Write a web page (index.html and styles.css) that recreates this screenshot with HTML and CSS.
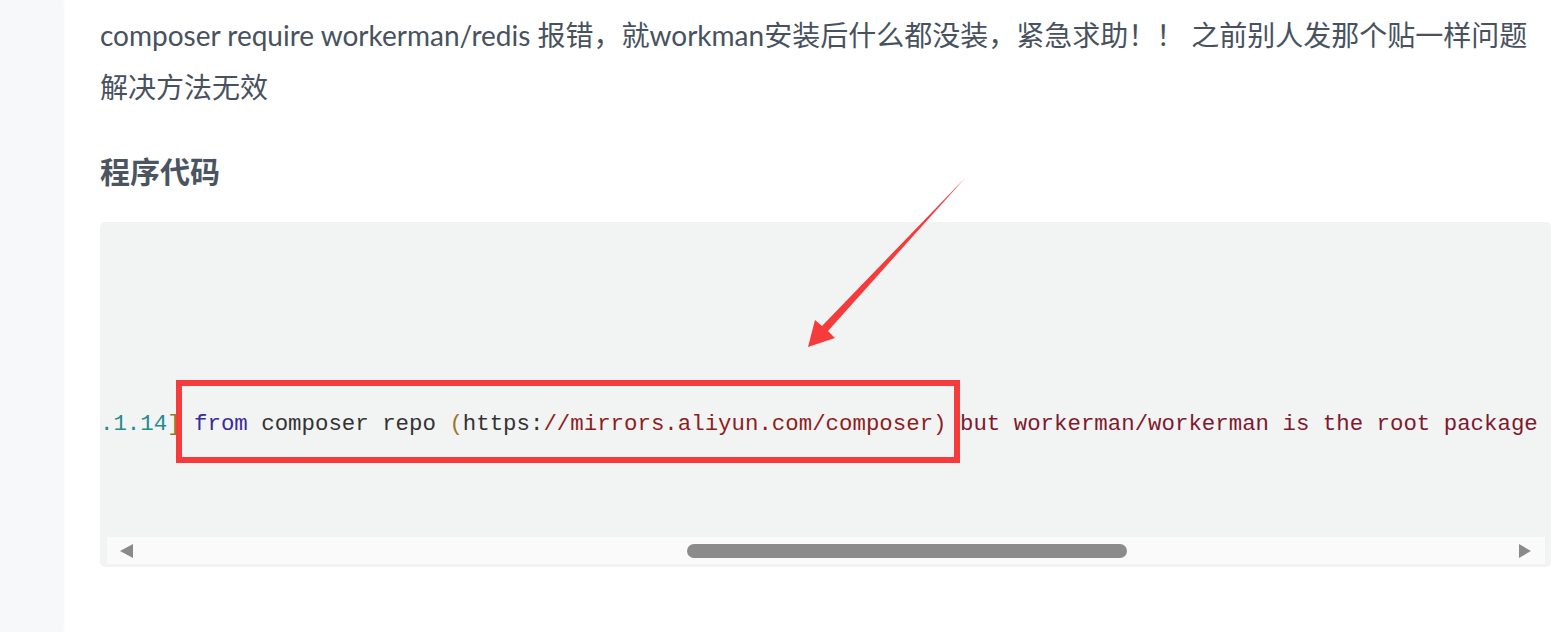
FILE: index.html
```html
<!DOCTYPE html>
<html lang="zh-CN">
<head>
  <meta charset="UTF-8" />
  <meta name="viewport" content="width=device-width, initial-scale=1.0"/>
  <title>composer require workerman/redis 报错</title>
  <link rel="stylesheet" href="styles.css">
</head>
<body>

<aside class="sidebar"></aside>

<main class="post">
  <p class="question">composer require workerman/redis 报错，就workman安装后什么都没装，紧急求助！！ 之前别人发那个贴一样问题解决方法无效</p>

  <h2 class="section-title">程序代码</h2>

  <div class="code-box">
    <pre class="code"><span class="c-num">.1.14</span><span class="c-brk">]</span> <span class="c-kw">from</span> composer repo <span class="c-brk">(</span>https:<span class="c-str">//mirrors.aliyun.com/composer)</span> <span class="c-err">but workerman/workerman is the root package</span></pre>
    <div class="scrollbar">
      <span class="arrow left"></span>
      <div class="rail"><div class="thumb"></div></div>
      <span class="arrow right"></span>
    </div>
  </div>
</main>

<!-- screenshot annotation -->
<svg class="annotation" width="1563" height="632" viewBox="0 0 1563 632">
  <rect x="179" y="383" width="778" height="77" fill="none" stroke="#f53b3b" stroke-width="6"/>
  <polygon points="966,177 828,331 835,338 808,347 815,320 822,326" fill="#f53b3b"/>
</svg>

</body>
</html>
```

FILE: styles.css
```css
* {
  box-sizing: border-box;
}

body {
  margin: 0;
  display: flex;
  min-height: 100vh;
  background: #fff;
  font-family: Lato, "Noto Sans CJK SC", sans-serif;
  color: #47525e;
  position: relative;
  overflow: hidden;
}

.sidebar {
  width: 63px;
  flex-shrink: 0;
  background: #f7f8fa;
  box-shadow: 1px 0 3px rgba(0, 0, 0, 0.04);
}

.post {
  flex: 1;
  padding: 0 12px 0 37px;
}

.question {
  margin: 9px 0 0;
  font-size: 28px;
  line-height: 52px;
}

.section-title {
  margin: 38px 0 31px;
  font-size: 30px;
  line-height: 40px;
  font-weight: bold;
  color: #4b5561;
}

.code-box {
  background: #f2f3f3;
  border-radius: 5px;
  padding-bottom: 3px;
}

.code {
  margin: 0;
  height: 315px;
  padding-top: 187px;
  overflow: hidden;
  white-space: pre;
  font-family: "Liberation Mono", "Courier New", monospace;
  font-size: 22.4px;
  line-height: 30px;
  color: #333;
}

.c-num { color: #268b8f; }
.c-brk { color: #9a762a; }
.c-kw  { color: #3a2a9e; }
.c-str { color: #8e1d1d; }
.c-err { color: #80192e; }

.scrollbar {
  display: flex;
  align-items: center;
  height: 27px;
  margin: 0 6px 0 7px;
  padding: 0 14px 0 13px;
  background: #fafafa;
}

.arrow {
  width: 0;
  height: 0;
  border-top: 7px solid transparent;
  border-bottom: 7px solid transparent;
}

.arrow.left {
  border-right: 13px solid #8a8a8a;
}

.arrow.right {
  border-left: 12px solid #8a8a8a;
}

.rail {
  flex: 1;
  display: flex;
}

.thumb {
  margin-left: 554px;
  width: 440px;
  height: 14px;
  border-radius: 7px;
  background: #8b8b8b;
}

.annotation {
  position: absolute;
  top: 0;
  left: 0;
  pointer-events: none;
}
```
